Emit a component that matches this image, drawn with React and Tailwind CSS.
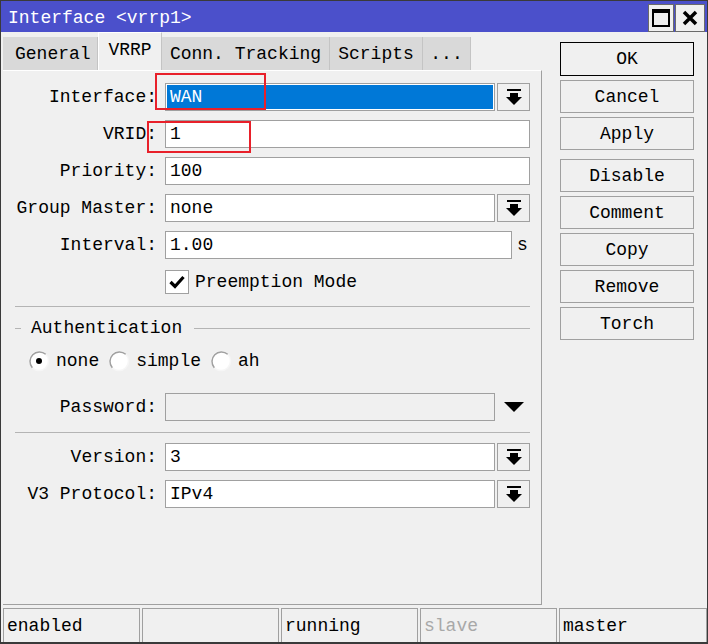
import React from 'react';

const font = "font-['Liberation_Mono','DejaVu_Sans_Mono',monospace]";

function DropIcon() {
  return (
    <svg width="16" height="16" viewBox="0 0 16 16">
      <rect x="1" y="0" width="14" height="2" fill="#000" />
      <rect x="4" y="4" width="8" height="5" fill="#000" />
      <polygon points="0,8 16,8 8,16" fill="#000" />
    </svg>
  );
}

function DropButton() {
  return (
    <div className="w-[33px] h-[28px] ml-[2px] border border-[#a0a0a0] bg-[#f0f0f0] flex items-center justify-center shrink-0">
      <DropIcon />
    </div>
  );
}

function Field({ label, value, drop, suffix, selected, top }) {
  return (
    <div className={`flex items-center h-[28px] ${top}`}>
      <div className="w-[162px] shrink-0 text-right pr-[8px] leading-none">{label}</div>
      {selected ? (
        <div className="flex-1 h-[28px] border border-[#a0a0a0] bg-white p-[1px]">
          <div className="h-full bg-[#0078d7] text-white flex items-center pl-[3px] leading-none">{value}</div>
        </div>
      ) : (
        <div className={`h-[28px] border border-[#a0a0a0] bg-white flex items-center pl-[4px] leading-none ${suffix ? 'w-[347px]' : 'flex-1'}`}>
          {value}
        </div>
      )}
      {drop && <DropButton />}
      {suffix && <span className="ml-[5px] leading-none">{suffix}</span>}
    </div>
  );
}

function Radio({ checked }) {
  return (
    <svg width="22" height="22" viewBox="0 0 22 22" className="shrink-0">
      <circle cx="11" cy="11" r="9.5" fill="#fff" stroke="#f6f6f6" strokeWidth="1.5" />
      <path d="M17.7 4.3 A9.5 9.5 0 0 0 4.3 17.7" fill="none" stroke="#a0a0a0" strokeWidth="1.5" />
      {checked && <circle cx="11" cy="11" r="3" fill="#000" />}
    </svg>
  );
}

const buttons = [
  { t: 'Cancel', mt: 'mt-[4px]' },
  { t: 'Apply', mt: 'mt-[4px]' },
  { t: 'Disable', mt: 'mt-[9px]' },
  { t: 'Comment', mt: 'mt-[4px]' },
  { t: 'Copy', mt: 'mt-[4px]' },
  { t: 'Remove', mt: 'mt-[4px]' },
  { t: 'Torch', mt: 'mt-[4px]' },
];

const status = [
  { t: 'enabled', w: 'w-[137px]' },
  { t: '', w: 'w-[137px]' },
  { t: 'running', w: 'w-[137px]' },
  { t: 'slave', w: 'w-[137px]', dim: true },
  { t: 'master', w: 'flex-1' },
];

export default function App() {
  return (
    <div className={`relative w-[708px] h-[644px] bg-[#f0f0f0] border border-b-2 border-[#3a3a3a] flex flex-col text-[18px] text-black ${font}`}>
      {/* title bar */}
      <div className="h-[31px] bg-[#4b50cb] flex items-center shrink-0">
        <span className="pl-[7px] pt-[3px] text-white leading-none flex-1">Interface &lt;vrrp1&gt;</span>
        <div className="flex gap-[1px] mr-[2px] mt-[2px]">
          <div className="w-[26px] h-[28px] bg-[#f0f0f0] border border-[#6a6a6a] flex items-center justify-center">
            <svg width="18" height="18" viewBox="0 0 18 18">
              <rect x="1" y="1" width="16" height="16" fill="none" stroke="#000" strokeWidth="2" />
              <rect x="1" y="1" width="16" height="3" fill="#000" />
            </svg>
          </div>
          <div className="w-[30px] h-[28px] bg-[#f0f0f0] border border-[#6a6a6a] flex items-center justify-center">
            <svg width="16" height="16" viewBox="0 0 16 16">
              <path d="M2 2 L14 14 M14 2 L2 14" stroke="#000" strokeWidth="3.5" />
            </svg>
          </div>
        </div>
      </div>

      {/* body */}
      <div className="flex h-[573px] shrink-0">
        <div className="ml-[2px] w-[539px] flex flex-col">
          {/* tabs */}
          <div className="h-[38px] flex items-end">
            <div className="w-[95px] h-[33px] bg-[#d9d9d9] border-r border-[#c4c4c4] flex items-center pl-[12px] leading-none">General</div>
            <div className="w-[64px] h-[38px] bg-[#f0f0f0] border-l border-t border-white border-r-[#c4c4c4] border-r flex items-center justify-center leading-none pb-[3px]">VRRP</div>
            <div className="w-[168px] h-[33px] bg-[#d9d9d9] border-r border-[#c4c4c4] flex items-center justify-center leading-none">Conn. Tracking</div>
            <div className="w-[93px] h-[33px] bg-[#d9d9d9] border-r border-[#c4c4c4] flex items-center justify-center leading-none">Scripts</div>
            <div className="w-[48px] h-[33px] bg-[#d9d9d9] border-r border-[#c4c4c4] flex items-center justify-center leading-none">...</div>
          </div>

          {/* panel */}
          <div className="h-[535px] border-t border-white border-r border-b border-r-[#a0a0a0] border-b-[#a0a0a0] pr-[11px]">
            <Field label="Interface:" value="WAN" drop selected top="mt-[12px]" />
            <Field label="VRID:" value="1" top="mt-[9px]" />
            <Field label="Priority:" value="100" top="mt-[9px]" />
            <Field label="Group Master:" value="none" drop top="mt-[9px]" />
            <Field label="Interval:" value="1.00" suffix="s" top="mt-[9px]" />

            <div className="flex items-center mt-[11px] ml-[162px] h-[24px]">
              <div className="w-[24px] h-[24px] border border-[#a0a0a0] bg-white flex items-center justify-center">
                <svg width="16" height="14" viewBox="0 0 16 14">
                  <path d="M1.5 7 L6 11.5 L14.5 2" fill="none" stroke="#000" strokeWidth="3.2" />
                </svg>
              </div>
              <span className="ml-[6px] leading-none">Preemption Mode</span>
            </div>

            <div className="ml-[12px] mt-[12px] h-px bg-[#b4b4b4]" />

            <div className="flex items-center ml-[12px] mt-[11px] h-[20px]">
              <div className="w-[6px] h-px bg-[#b4b4b4]" />
              <span className="ml-[10px] leading-none">Authentication</span>
              <div className="ml-[12px] flex-1 h-px bg-[#b4b4b4]" />
            </div>

            <div className="flex items-center ml-[25px] mt-[12px] h-[22px]">
              <Radio checked />
              <span className="ml-[6px] leading-none">none</span>
              <span className="ml-[9px]"><Radio /></span>
              <span className="ml-[6px] leading-none">simple</span>
              <span className="ml-[9px]"><Radio /></span>
              <span className="ml-[6px] leading-none">ah</span>
            </div>

            <div className="flex items-center h-[28px] mt-[21px]">
              <div className="w-[162px] shrink-0 text-right pr-[8px] leading-none">Password:</div>
              <div className="w-[330px] h-[28px] border border-[#a0a0a0] bg-[#f0f0f0]" />
              <svg width="20" height="10" viewBox="0 0 20 10" className="ml-[9px]">
                <polygon points="0,0 20,0 10,10" fill="#000" />
              </svg>
            </div>

            <div className="ml-[12px] mt-[11px] h-px bg-[#b4b4b4]" />

            <Field label="Version:" value="3" drop top="mt-[10px]" />
            <Field label="V3 Protocol:" value="IPv4" drop top="mt-[9px]" />
          </div>
        </div>

        {/* buttons */}
        <div className="ml-[18px] w-[134px] flex flex-col pt-[10px]">
          <div className="h-[34px] border border-black bg-[#f0f0f0] flex items-center justify-center leading-none">OK</div>
          {buttons.map(b => (
            <div key={b.t} className={`h-[33px] border border-[#a0a0a0] bg-[#f0f0f0] flex items-center justify-center leading-none ${b.mt}`}>
              {b.t}
            </div>
          ))}
        </div>
      </div>

      {/* status bar */}
      <div className="flex-1 mt-[3px] flex gap-[2px] ml-[2px]">
        {status.map((s, i) => (
          <div key={i} className={`${s.w} border-t border-l border-r border-[#a0a0a0] flex items-center pl-[3px] leading-none ${s.dim ? 'text-[#a8a8a8]' : ''}`}>
            {s.t}
          </div>
        ))}
      </div>

      {/* annotations */}
      <div className="absolute left-[154px] top-[72px] w-[111px] h-[37px] border-2 border-[#e8202a]" />
      <div className="absolute left-[146px] top-[120px] w-[104px] h-[32px] border-2 border-[#e8202a]" />
    </div>
  );
}
